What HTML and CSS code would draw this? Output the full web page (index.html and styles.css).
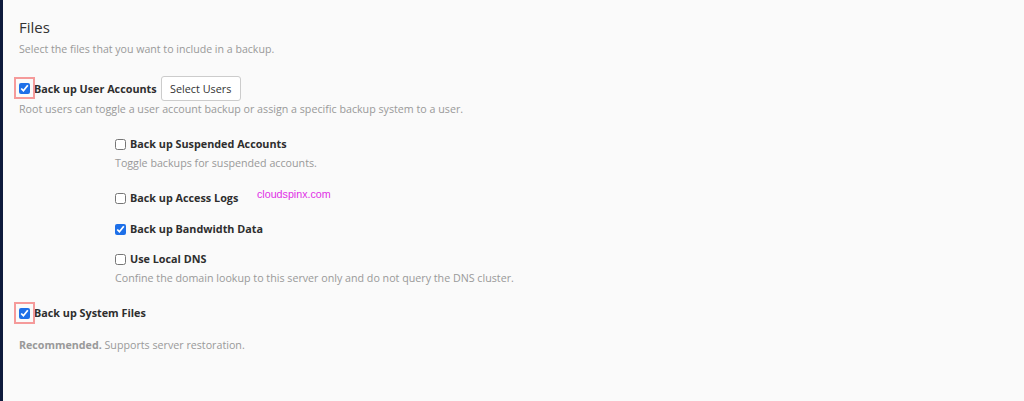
FILE: index.html
```html
<!DOCTYPE html>
<html lang="en">

<head>
    <meta charset="UTF-8">
    <title>Backup Files</title>
    <link rel="stylesheet" href="styles.css">
</head>

<body>
    <div class="page">
        <div class="side-strip"></div>
        <div class="content">
            <h2 class="section-title">Files</h2>
            <p class="lead">Select the files that you want to include in a backup.</p>

            <div class="option option-main">
                <span class="marked"><input type="checkbox" checked></span>
                <label class="option-label">Back up User Accounts</label>
                <button class="btn">Select Users</button>
            </div>
            <p class="help">Root users can toggle a user account backup or assign a specific backup system to a user.</p>

            <div class="sub-options">
                <div class="option option-suspended">
                    <input type="checkbox">
                    <label class="option-label">Back up Suspended Accounts</label>
                </div>
                <p class="help">Toggle backups for suspended accounts.</p>

                <div class="option option-logs">
                    <input type="checkbox">
                    <label class="option-label">Back up Access Logs</label>
                    <span class="watermark">cloudspinx.com</span>
                </div>

                <div class="option option-bandwidth">
                    <input type="checkbox" checked>
                    <label class="option-label">Back up Bandwidth Data</label>
                </div>

                <div class="option option-dns">
                    <input type="checkbox">
                    <label class="option-label">Use Local DNS</label>
                </div>
                <p class="help">Confine the domain lookup to this server only and do not query the DNS cluster.</p>
            </div>

            <div class="option option-system">
                <span class="marked"><input type="checkbox" checked></span>
                <label class="option-label">Back up System Files</label>
            </div>
            <p class="help help-last"><strong>Recommended.</strong> Supports server restoration.</p>
        </div>
    </div>
</body>

</html>
```

FILE: styles.css
```css
body {
    font-family: "Open Sans", Arial, sans-serif;
    margin: 0;
    padding: 0;
    background-color: #fafafa;
    color: #333;
}

.page {
    display: flex;
    min-height: 401px;
}

.side-strip {
    width: 3px;
    background-color: #0e1a3c;
    flex-shrink: 0;
}

.content {
    padding: 16px 0 0 16px;
    flex: 1;
}

.section-title {
    font-size: 15px;
    font-weight: 400;
    line-height: 22px;
    margin: 0;
    color: #333;
}

.lead {
    font-size: 10.6px;
    line-height: 16px;
    color: #999;
    margin: 3px 0 0 0;
}

.option {
    display: flex;
    align-items: center;
    line-height: 18px;
}

.option input {
    width: 11px;
    height: 11px;
    margin: 0 4px 0 0;
    accent-color: #1d6fe8;
}

.option-label {
    font-size: 10.8px;
    font-weight: 700;
    color: #2e2e2e;
}

.option-main {
    margin-top: 19px;
    height: 25px;
}

.marked {
    position: relative;
    display: inline-flex;
}

.marked::after {
    content: "";
    position: absolute;
    left: -5px;
    top: -6px;
    width: 17px;
    height: 18px;
    border: 2px solid #f59a9a;
}

.btn {
    font-family: "Open Sans", Arial, sans-serif;
    font-size: 10.8px;
    color: #333;
    background-color: #fff;
    border: 1px solid #ccc;
    border-radius: 3px;
    height: 25px;
    width: 80px;
    padding: 0;
    margin-left: 4px;
}

.help {
    font-size: 10.7px;
    line-height: 16px;
    color: #999;
    margin: 0;
}

.help strong {
    font-weight: 700;
}

.sub-options {
    padding-left: 96px;
}

.option-suspended {
    margin-top: 18px;
}

.option-suspended + .help {
    margin-top: 2px;
}

.option-logs {
    margin-top: 18px;
    position: relative;
}

.option-bandwidth {
    margin-top: 13px;
}

.option-dns {
    margin-top: 12px;
}

.option-dns + .help {
    margin-top: 2px;
}

.option-system {
    margin-top: 18px;
}

.help-last {
    margin-top: 15px;
}

.watermark {
    position: absolute;
    left: 142px;
    top: -4px;
    font-family: "Liberation Sans", Arial, sans-serif;
    font-size: 10.7px;
    color: #e030e6;
}
```
